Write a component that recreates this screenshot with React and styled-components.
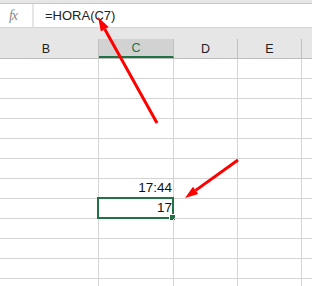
import React from "react";
import styled, { createGlobalStyle } from "styled-components";

const columns = [
  { key: "B", width: 105 },
  { key: "C", width: 75 },
  { key: "D", width: 64 },
  { key: "E", width: 64 },
  { key: "F", width: 60 },
];

const values = {
  6: { C: "17:44" },
  7: { C: "17" },
};

const App = () => {
  return (
    <Page>
      <GlobalStyle />
      <FormulaBar>
        <FormulaRow>
          <FxBox>fx</FxBox>
          <FormulaInput>=HORA(C7)</FormulaInput>
        </FormulaRow>
      </FormulaBar>
      <HeaderRow>
        {columns.map((col) => (
          <HeaderCell key={col.key} $width={col.width} $active={col.key === "C"}>
            {col.key !== "F" && col.key}
          </HeaderCell>
        ))}
      </HeaderRow>
      {Array.from({ length: 12 }).map((_, r) => (
        <Row key={r}>
          {columns.map((col) => (
            <Cell key={col.key} $width={col.width}>
              {values[r] && values[r][col.key]}
              {r === 7 && col.key === "C" && (
                <Selection>
                  <FillHandle />
                </Selection>
              )}
            </Cell>
          ))}
        </Row>
      ))}
      <Arrows width="312" height="286" viewBox="0 0 312 286">
        <line x1="157" y1="123" x2="104.8" y2="29.3" stroke="#ff0000" strokeWidth="3" />
        <polygon points="98,17 108.7,27.1 100.9,31.5" fill="#ff0000" />
        <line x1="238" y1="160" x2="195.6" y2="190.4" stroke="#ff0000" strokeWidth="3" />
        <polygon points="185,198 198.2,194.1 193,186.7" fill="#ff0000" />
      </Arrows>
    </Page>
  );
};

const GlobalStyle = createGlobalStyle`
  body {
    margin: 0;
    background: #fff;
  }
`;

const Page = styled.div`
  position: relative;
  width: 312px;
  height: 286px;
  overflow: hidden;
  background: #fff;
  font-family: "Liberation Sans", Arial, sans-serif;
`;

const FormulaBar = styled.div`
  height: 38px;
  padding-top: 3px;
  box-sizing: border-box;
  background: #e6e6e6;
`;

const FormulaRow = styled.div`
  display: flex;
  gap: 2px;
  height: 25px;
  border-top: 1px solid #c8c8c8;
  border-bottom: 1px solid #d4d4d4;
  box-sizing: border-box;
`;

const FxBox = styled.div`
  width: 32px;
  background: #fff;
  display: flex;
  align-items: center;
  justify-content: center;
  padding-right: 6px;
  box-sizing: border-box;
  color: #8a8a8a;
  font-family: "Liberation Serif", serif;
  font-style: italic;
  font-size: 14px;
  letter-spacing: -1px;
`;

const FormulaInput = styled.div`
  flex: 1;
  background: #fff;
  display: flex;
  align-items: center;
  padding-left: 11px;
  font-size: 13px;
  color: #222;
`;

const HeaderRow = styled.div`
  display: flex;
  height: 21px;
  margin-left: -6px;
  background: #e6e6e6;
  border-bottom: 1px solid #bdbdbd;
  box-sizing: border-box;
`;

const HeaderCell = styled.div`
  flex: 0 0 ${({ $width }) => $width}px;
  display: flex;
  align-items: center;
  justify-content: center;
  box-sizing: border-box;
  border-right: 1px solid #c0c0c0;
  border-bottom: ${({ $active }) => ($active ? "2px solid #217346" : "none")};
  background: ${({ $active }) => ($active ? "#d2d2d2" : "transparent")};
  color: ${({ $active }) => ($active ? "#217346" : "#222")};
  font-size: 12.5px;
  margin-top: 1px;
`;

const Row = styled.div`
  display: flex;
  height: 20px;
  margin-left: -6px;
`;

const Cell = styled.div`
  position: relative;
  flex: 0 0 ${({ $width }) => $width}px;
  box-sizing: border-box;
  border-right: 1px solid #d4d4d4;
  border-bottom: 1px solid #d4d4d4;
  display: flex;
  align-items: flex-end;
  justify-content: flex-end;
  padding: 0 1px 3px 0;
  font-size: 13.5px;
  color: #111;
`;

const Selection = styled.div`
  position: absolute;
  top: -2px;
  left: -2px;
  right: -1px;
  bottom: -1px;
  border: 2px solid #217346;
`;

const FillHandle = styled.div`
  position: absolute;
  right: -4px;
  bottom: -4px;
  width: 5px;
  height: 5px;
  background: #217346;
  border: 1px solid #fff;
`;

const Arrows = styled.svg`
  position: absolute;
  top: 0;
  left: 0;
  pointer-events: none;
`;

export default App;
